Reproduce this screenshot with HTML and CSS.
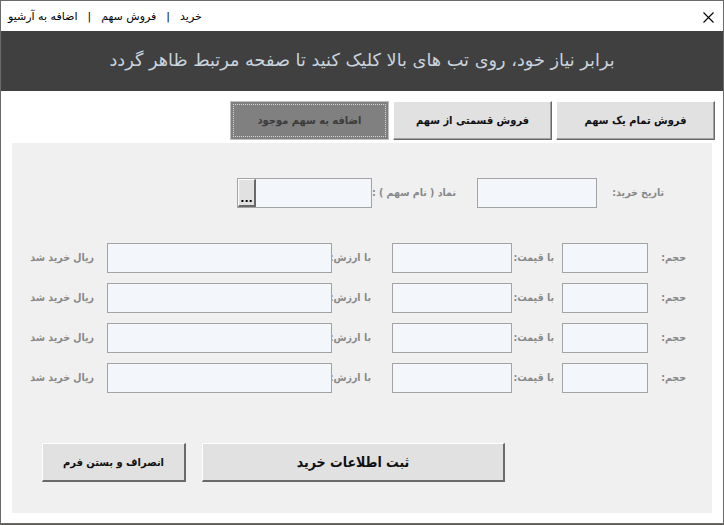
FILE: index.html
```html
<!DOCTYPE html>
<html lang="fa" dir="rtl">
<head>
<meta charset="utf-8">
<title>خرید</title>
<link rel="stylesheet" href="styles.css">
</head>
<body>
<div class="window">
  <div class="titlebar">
    <span class="close">
      <svg width="11" height="11" viewBox="0 0 11 11"><path d="M0.5 0.5 L10.5 10.5 M10.5 0.5 L0.5 10.5" stroke="#000" stroke-width="1.1" fill="none"/></svg>
    </span>
    <span class="menu">خرید<span class="sep">|</span>فروش سهم<span class="sep">|</span>اضافه به آرشیو</span>
  </div>
  <div class="banner">برابر نیاز خود، روی تب های بالا کلیک کنید تا صفحه مرتبط ظاهر گردد</div>
  <div class="content">
    <div class="tabs">
      <div class="tab">فروش تمام یک سهم</div>
      <div class="tab">فروش قسمتی از سهم</div>
      <div class="tab active"><span class="focus">اضافه به سهم موجود</span></div>
    </div>
    <div class="panel">
      <div class="row first">
        <div class="lbl w67">تاریخ خرید:</div>
        <div class="box w120"></div>
        <div class="lbl w105 pr21">نماد ( نام سهم ) :</div>
        <div class="box w135 picker"><span class="dots">...</span></div>
      </div>
      <div class="rows">
        <div class="row">
          <div class="lbl w38">حجم:</div>
          <div class="box w86"></div>
          <div class="lbl w50 pr10">با قیمت:</div>
          <div class="box w120"></div>
          <div class="lbl w60 pr25">با ارزش:</div>
          <div class="box w225"></div>
          <div class="lbl w95 pr13">ریال خرید شد</div>
        </div>
        <div class="row">
          <div class="lbl w38">حجم:</div>
          <div class="box w86"></div>
          <div class="lbl w50 pr10">با قیمت:</div>
          <div class="box w120"></div>
          <div class="lbl w60 pr25">با ارزش:</div>
          <div class="box w225"></div>
          <div class="lbl w95 pr13">ریال خرید شد</div>
        </div>
        <div class="row">
          <div class="lbl w38">حجم:</div>
          <div class="box w86"></div>
          <div class="lbl w50 pr10">با قیمت:</div>
          <div class="box w120"></div>
          <div class="lbl w60 pr25">با ارزش:</div>
          <div class="box w225"></div>
          <div class="lbl w95 pr13">ریال خرید شد</div>
        </div>
        <div class="row">
          <div class="lbl w38">حجم:</div>
          <div class="box w86"></div>
          <div class="lbl w50 pr10">با قیمت:</div>
          <div class="box w120"></div>
          <div class="lbl w60 pr25">با ارزش:</div>
          <div class="box w225"></div>
          <div class="lbl w95 pr13">ریال خرید شد</div>
        </div>
      </div>
      <div class="actions">
        <div class="btn cancel">انصراف و بستن فرم</div>
        <div class="btn submit">ثبت اطلاعات خرید</div>
      </div>
    </div>
  </div>
</div>
</body>
</html>
```
FILE: styles.css
```css
* { box-sizing: border-box; }
html, body { margin: 0; padding: 0; }
body {
  width: 724px;
  height: 525px;
  background: #5e5e52;
  font-family: "DejaVu Sans", sans-serif;
  overflow: hidden;
}
.window {
  width: 724px;
  height: 524px;
  border: 1px solid #6a6a6a;
  background: #ffffff;
  display: flex;
  flex-direction: column;
}
.titlebar {
  height: 30px;
  display: flex;
  align-items: center;
  justify-content: space-between;
  padding: 0 9px 0 7px;
  background: #fff;
}
.close { display: flex; width: 11px; height: 11px; margin-top: 2px; }
.menu {
  font-size: 11px;
  color: #000;
  margin-top: 1px;
}
.sep { margin: 0 10px; }
.banner {
  height: 60px;
  background: #404040;
  color: #c9d3de;
  font-size: 17.7px;
  display: flex;
  align-items: center;
  justify-content: center;
  padding-bottom: 2px;
}
.content {
  flex: 1;
  padding: 10px 8px 0 9px;
  display: flex;
  flex-direction: column;
}
.tabs {
  display: flex;
  gap: 4px;
  height: 39px;
}
.tab {
  width: 159px;
  height: 39px;
  background: #e1e1e1;
  border-top: 1px solid #ffffff;
  border-left: 1px solid #ffffff;
  border-right: 1px solid #696969;
  border-bottom: 1px solid #696969;
  box-shadow: inset -1px -1px 0 #a0a0a0;
  font-family: "DejaVu Sans Condensed", "DejaVu Sans", sans-serif;
  font-size: 11px;
  font-weight: bold;
  color: #111;
  display: flex;
  align-items: center;
  justify-content: center;
}
.tab.active {
  background: #808080;
  border-color: #c0c0c0;
  box-shadow: none;
  padding: 2px;
  color: #3c3c3c;
}
.focus {
  flex: 1;
  align-self: stretch;
  display: flex;
  align-items: center;
  justify-content: center;
  border: 1px dotted #d8d8d8;
}
.panel {
  margin: 3px 3px 0 0;
  width: 700px;
  height: 370px;
  background: #f0f0f0;
  padding-top: 35px;
  display: flex;
  flex-direction: column;
}
.row {
  display: flex;
  height: 30px;
  align-items: center;
}
.row.first { padding-right: 48px; }
.rows {
  margin-top: 35px;
  display: flex;
  flex-direction: column;
  gap: 10px;
}
.rows .row { padding-right: 26px; }
.lbl {
  font-family: "DejaVu Sans Condensed", "DejaVu Sans", sans-serif;
  font-size: 10.5px;
  font-weight: bold;
  color: #898989;
  white-space: nowrap;
  text-align: right;
  margin-top: -3px;
  flex-shrink: 0;
}
.box {
  height: 30px;
  background: #f3f6fb;
  border: 1px solid #a3a3a3;
  flex-shrink: 0;
}
.picker { display: flex; justify-content: flex-end; }
.dots {
  width: 18px;
  height: 28px;
  background: #e1e1e1;
  border-top: 1px solid #ffffff;
  border-left: 1px solid #ffffff;
  border-right: 2px solid #696969;
  border-bottom: 2px solid #696969;
  font-size: 11px;
  font-weight: bold;
  color: #000;
  display: flex;
  align-items: flex-end;
  justify-content: center;
  line-height: 13px;
  direction: ltr;
}
.w38 { width: 38px; }
.w50 { width: 50px; }
.w60 { width: 60px; }
.w67 { width: 67px; }
.w86 { width: 86px; }
.w95 { width: 95px; }
.w105 { width: 105px; }
.w120 { width: 120px; }
.w135 { width: 135px; }
.w225 { width: 225px; }
.pr10 { padding-right: 8px; }
.pr13 { padding-right: 13px; }
.pr21 { padding-right: 21px; }
.pr25 { padding-right: 21px; }
.actions {
  direction: ltr;
  display: flex;
  margin-top: 50px;
  padding-left: 30px;
  gap: 16px;
}
.btn {
  height: 39px;
  background: #e1e1e1;
  border-top: 1px solid #ffffff;
  border-left: 1px solid #ffffff;
  border-right: 2px solid #6a6a6a;
  border-bottom: 2px solid #6a6a6a;
  font-family: "DejaVu Sans Condensed", "DejaVu Sans", sans-serif;
  font-weight: bold;
  color: #111;
  display: flex;
  align-items: center;
  justify-content: center;
  direction: rtl;
}
.cancel { width: 144px; font-size: 11px; }
.submit { width: 303px; font-size: 14px; }
```
